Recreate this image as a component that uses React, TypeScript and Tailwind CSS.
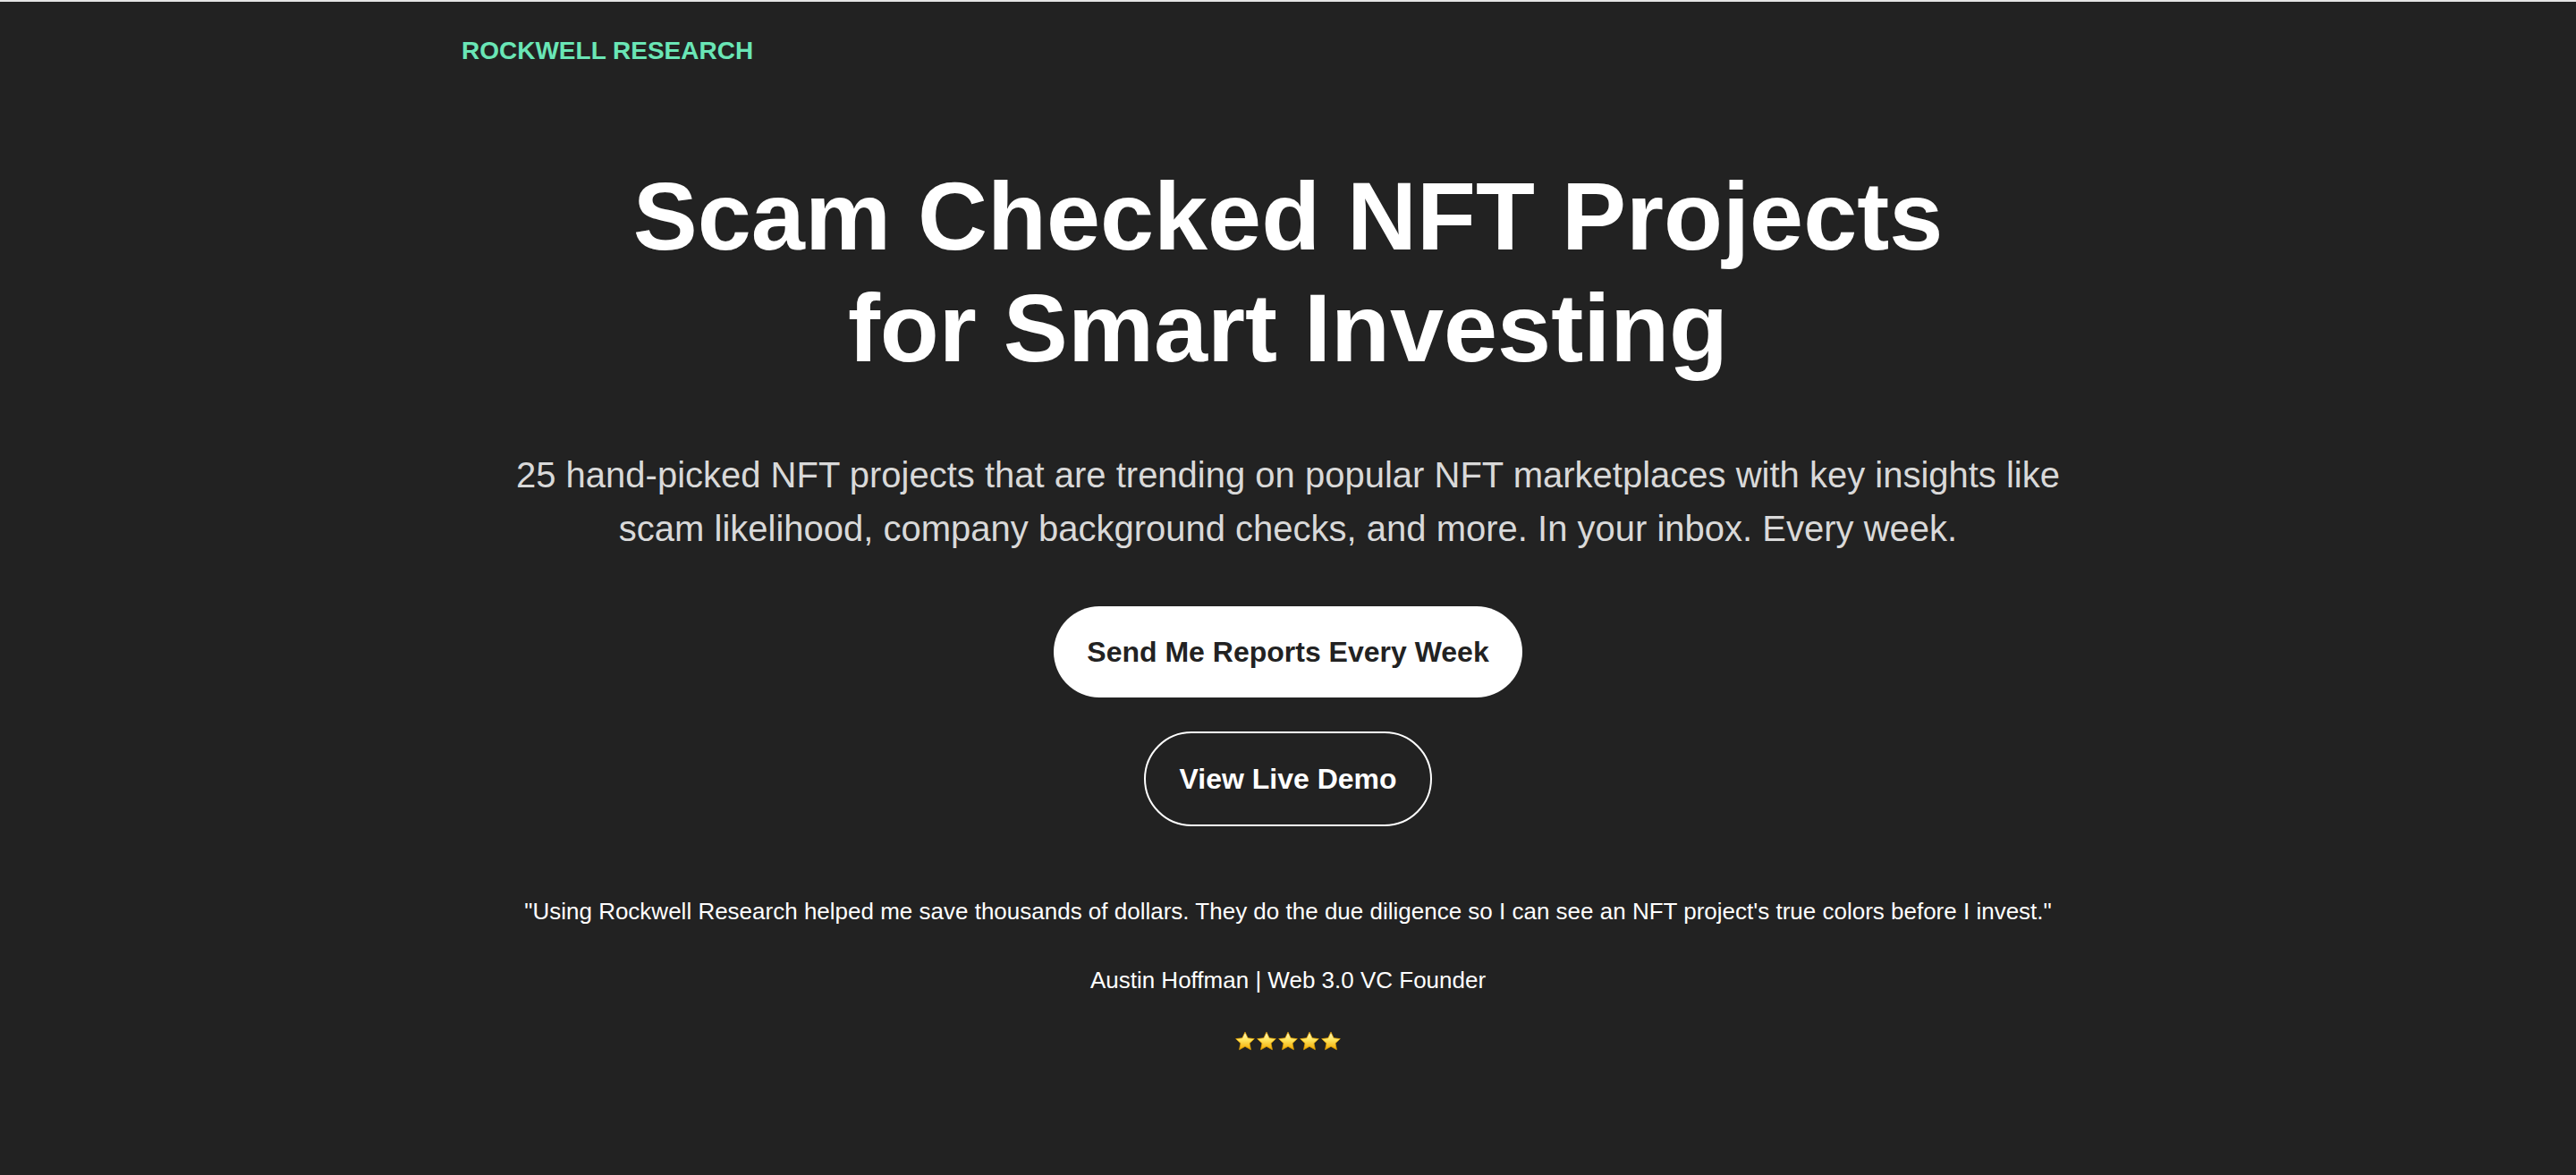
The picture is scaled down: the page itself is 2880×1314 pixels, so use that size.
import React from "react";

function Star() {
  return (
    <svg width="24" height="23" viewBox="0 0 24 23" aria-hidden="true">
      <defs>
        <linearGradient id="starg" x1="0" y1="0" x2="0" y2="1">
          <stop offset="0%" stopColor="#fffbd0" />
          <stop offset="45%" stopColor="#ffe45c" />
          <stop offset="100%" stopColor="#f2a900" />
        </linearGradient>
      </defs>
      <path
        d="M12 1.2l3.1 6.6 7.2.9-5.3 5 1.4 7.1L12 17.3l-6.4 3.5 1.4-7.1-5.3-5 7.2-.9z"
        fill="url(#starg)"
        stroke="#e0a000"
        strokeWidth="0.8"
        strokeLinejoin="round"
      />
    </svg>
  );
}

export default function App() {
  return (
    <div
      className="min-h-screen w-full bg-[#222222] border-t-2 border-[#e4e4e4] text-white"
      style={{ fontFamily: '"Liberation Sans", Arial, Helvetica, sans-serif' }}
    >
      <header className="mx-auto w-[1848px] pt-[38px]">
        <div className="text-[28px] font-bold leading-[34px] text-[#6ae6b6]">
          ROCKWELL RESEARCH
        </div>
      </header>

      <main className="flex flex-col items-center text-center">
        <h1 className="mt-[105px] text-[108px] font-bold leading-[125px] text-white">
          Scam Checked NFT Projects
          <br />
          for Smart Investing
        </h1>

        <p className="mt-[72px] max-w-[1800px] text-[40px] leading-[60px] text-[#d9d9d9]">
          25 hand-picked NFT projects that are trending on popular NFT marketplaces with key
          insights like scam likelihood, company background checks, and more. In your inbox.
          Every week.
        </p>

        <button className="mt-[57px] rounded-full bg-white px-[37px] py-[32px] text-[32px] font-bold leading-[38px] text-[#222222]">
          Send Me Reports Every Week
        </button>

        <button className="mt-[38px] rounded-full border-2 border-white px-[37px] py-[32px] text-[32px] font-bold leading-[38px] text-white">
          View Live Demo
        </button>

        <p className="mt-[76px] text-[26px] leading-[39px] text-white">
          "Using Rockwell Research helped me save thousands of dollars. They do the due diligence
          so I can see an NFT project's true colors before I invest."
        </p>

        <p className="mt-[38px] text-[26px] leading-[39px] text-white">
          Austin Hoffman | Web 3.0 VC Founder
        </p>

        <div className="mt-[37px] flex items-center">
          <Star />
          <Star />
          <Star />
          <Star />
          <Star />
        </div>
      </main>
    </div>
  );
}
